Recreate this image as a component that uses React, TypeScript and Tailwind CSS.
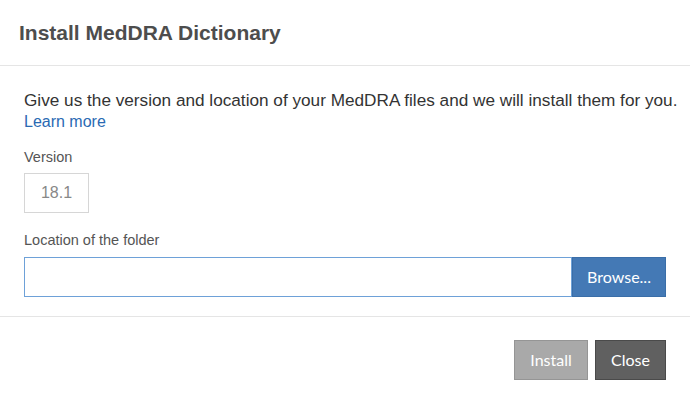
// Install MedDRA Dictionary dialog

export default function App() {
  return (
    <div className="h-[402px] w-[690px] bg-white [font-family:'Liberation_Sans',Arial,sans-serif]">
      {/* header */}
      <header className="flex h-[66px] items-center border-b border-[#e5e5e5] px-[19px]">
        <h1 className="text-[21px] font-semibold text-[#4d4d4d]">Install MedDRA Dictionary</h1>
      </header>

      {/* body */}
      <section className="border-b border-[#e5e5e5] px-6 pb-[19px] pt-[24px]">
        <p className="whitespace-nowrap text-[17.2px] leading-[21px] text-[#333]">
          Give us the version and location of your MedDRA files and we will install them for you.
          <br />
          <a href="#" className="text-[16px] text-[#2a6ab3]">Learn more</a>
        </p>

        <label className="mt-[16px] block text-[14.5px] leading-[18px] text-[#555]">Version</label>
        <div className="mt-[7px] flex h-10 w-[65px] items-center justify-center border border-[#d6d6d6] text-[16px] text-[#888]">
          18.1
        </div>

        <label className="mt-[18px] block text-[14.5px] leading-[18px] text-[#555]">Location of the folder</label>
        <div className="mt-[8px] flex h-10 w-[642px]">
          <input className="h-10 flex-1 border border-[#6ea1d8] px-2 outline-none" />
          <button className="h-10 w-[94px] border border-[#3a6ea8] bg-[#4479b5] [font-family:Lato,sans-serif] text-[16px] text-white">
            Browse...
          </button>
        </div>
      </section>

      {/* footer */}
      <footer className="flex justify-end gap-[7px] px-6 pt-[23px]">
        <button className="h-10 w-[74px] border border-[#959595] bg-[#a9a9a9] [font-family:Lato,sans-serif] text-[16px] text-white">
          Install
        </button>
        <button className="h-10 w-[71px] border border-[#4a4a4a] bg-[#606060] [font-family:Lato,sans-serif] text-[16px] text-white">
          Close
        </button>
      </footer>
    </div>
  );
}
